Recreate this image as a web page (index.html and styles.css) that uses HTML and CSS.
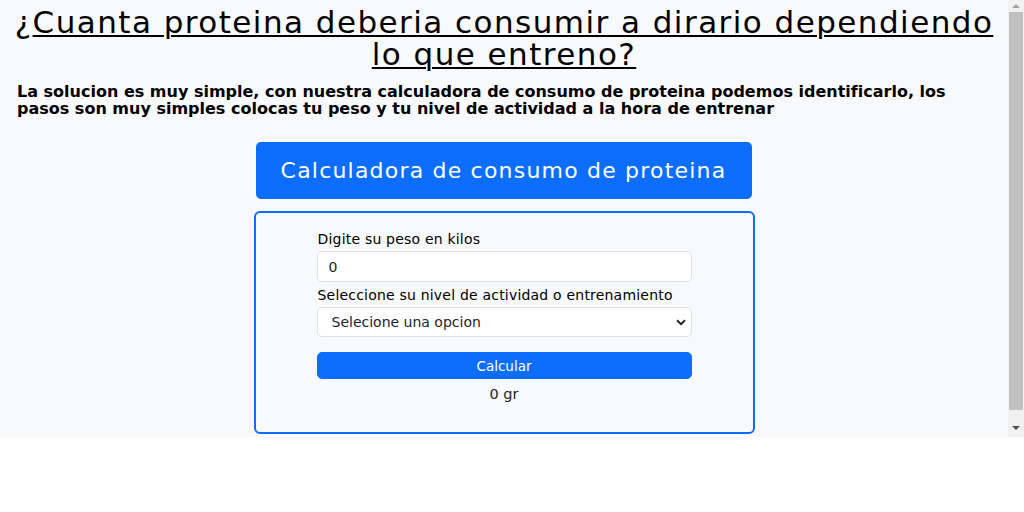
FILE: index.html
```html
<!DOCTYPE html>
<html lang="es">
<head>
<meta charset="utf-8">
<title>Calculadora de proteina</title>
<link rel="stylesheet" href="styles.css">
</head>
<body>
<div class="viewport">
  <main class="page">
    <h1 class="title">¿<u>Cuanta proteina deberia consumir a dirario dependiendo lo que entreno?</u></h1>
    <p class="intro">La solucion es muy simple, con nuestra calculadora de consumo de proteina podemos identificarlo, los pasos son muy simples colocas tu peso y tu nivel de actividad a la hora de entrenar</p>
    <div class="calc">
      <div class="calc-head">Calculadora de consumo de proteina</div>
      <form class="calc-card">
        <div class="fields">
          <label class="lbl" for="peso">Digite su peso en kilos</label>
          <input class="field" id="peso" type="text" value="0">
          <label class="lbl" for="nivel">Seleccione su nivel de actividad o entrenamiento</label>
          <div class="field select">
            <span>Selecione una opcion</span>
            <svg class="chev" width="10" height="7" viewBox="0 0 10 7"><path d="M1 1.2 L5 5.2 L9 1.2" fill="none" stroke="#212529" stroke-width="2"/></svg>
          </div>
          <button class="btn" type="button">Calcular</button>
          <div class="result">0 gr</div>
        </div>
      </form>
    </div>
  </main>
  <div class="scrollbar">
    <div class="arrow up"></div>
    <div class="thumb"></div>
    <div class="arrow down"></div>
  </div>
</div>
</body>
</html>
```

FILE: styles.css
```css
html, body {
  margin: 0;
  padding: 0;
  background: #ffffff;
}
body {
  font-family: "DejaVu Sans", "Open Sans", sans-serif;
  color: #000;
}
.viewport {
  height: 437px;
  display: flex;
  background: #f8f9fa;
  overflow: hidden;
}
.page {
  flex: 1;
  padding: 0 6px;
}
.title {
  margin: 6px 0 0;
  font-size: 31px;
  font-weight: 400;
  line-height: 32px;
  letter-spacing: 1.45px;
  text-align: center;
}
.title u {
  text-decoration-thickness: 2px;
  text-underline-offset: 2px;
}
.intro {
  margin: 13px 11px 0 11px;
  font-size: 16px;
  font-weight: 700;
  line-height: 17px;
}
.calc {
  width: 501px;
  margin: 25px auto 0;
  display: flex;
  flex-direction: column;
  gap: 12px;
}
.calc-head {
  margin: 0 3px 0 2px;
  height: 57px;
  background: #0d6efd;
  border-radius: 5px;
  color: #fff;
  font-size: 22px;
  letter-spacing: 1.2px;
  display: flex;
  align-items: center;
  justify-content: center;
}
.calc-card {
  margin: 0;
  height: 223px;
  border: 2px solid #0d6efd;
  border-radius: 6px;
  box-sizing: border-box;
  padding: 18px 0 0 61px;
}
.fields {
  width: 375px;
  display: flex;
  flex-direction: column;
}
.lbl {
  font-size: 14px;
  letter-spacing: 0.2px;
  line-height: 17px;
  margin: 0 0 3px 1px;
}
.field {
  box-sizing: border-box;
  height: 31px;
  background: #fff;
  border: 1px solid #dee2e6;
  border-radius: 5px;
  font: inherit;
  font-size: 14px;
  padding: 0 11px;
  color: #212529;
  margin-bottom: 5px;
}
.select {
  display: flex;
  align-items: center;
  justify-content: space-between;
  padding: 0 5px 0 14px;
  margin-bottom: 15px;
  height: 30px;
}
.chev { display: block; }
.btn {
  height: 27px;
  background: #0d6efd;
  border: 1px solid #0d6efd;
  border-radius: 5px;
  color: #fff;
  font: inherit;
  font-size: 13.5px;
  padding: 0;
}
.result {
  margin-top: 7px;
  line-height: 17px;
  text-align: center;
  font-size: 14.5px;
  color: #212529;
}
.scrollbar {
  width: 16px;
  flex: none;
  background: #f1f1f1;
  display: flex;
  flex-direction: column;
  align-items: center;
}
.arrow {
  width: 0;
  height: 0;
  border-left: 4px solid transparent;
  border-right: 4px solid transparent;
}
.up {
  margin: 4px 0 4px;
  border-bottom: 4px solid #a3a3a3;
}
.thumb {
  width: 14px;
  height: 398px;
  background: #c1c1c1;
}
.down {
  margin-top: 16px;
  border-top: 4px solid #505050;
}
```
